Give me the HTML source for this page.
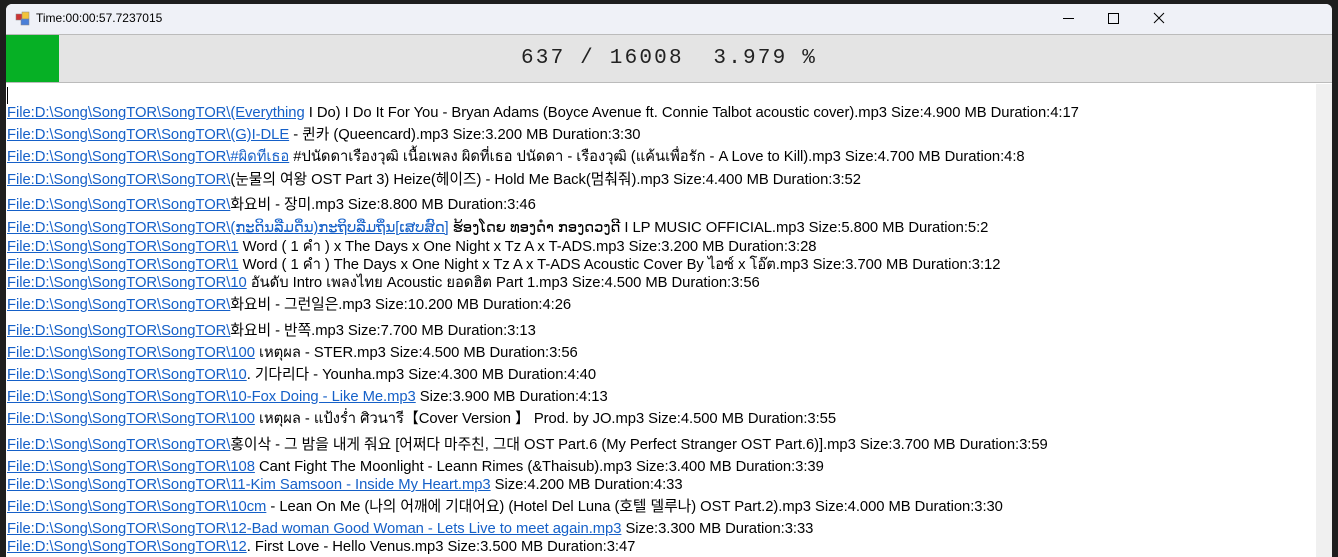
<!DOCTYPE html>
<html><head><meta charset="utf-8"><style>
body{margin:0;width:1338px;height:557px;background:#1e1e1e;position:relative;overflow:hidden;font-family:"Liberation Sans","Noto Sans CJK KR",sans-serif}
.win{position:absolute;left:6px;top:4px;width:1326px;height:553px;background:#fff;border-radius:6px 6px 0 0;overflow:hidden}
.tb{position:absolute;left:0;top:0;width:100%;height:30px;background:#eff1f7}
.title{position:absolute;left:30px;top:7px;font-size:12px;color:#000;font-family:"Liberation Sans",sans-serif}
.prog{position:absolute;left:0;top:30px;width:1326px;height:49px;background:#e4e4e4;border-top:1px solid #bbb;border-bottom:1px solid #bbb;box-sizing:border-box}
.bar{position:absolute;left:0;top:0;width:53px;height:100%;background:#06b025}
.pt{position:absolute;left:0;width:100%;top:12px;text-align:center;font-family:"Liberation Mono",monospace;font-size:21px;letter-spacing:2.2px;color:#222;white-space:pre}
.sb{position:absolute;left:1310px;top:80px;width:16px;height:480px;background:#f0f0f0}
.th{position:absolute;left:1317px;top:102px;width:2px;height:19px;background:#888}
.l{position:absolute;left:1px;font-size:14.8px;line-height:18px;white-space:nowrap;color:#000;letter-spacing:-0.05px}
.l a{color:#1560c8;text-decoration:underline}
</style></head><body>
<div class="win">
<div class="tb">
<svg style="position:absolute;left:9px;top:7px" width="16" height="16"><rect x="1" y="3" width="6" height="6" fill="#c33" stroke="#888" stroke-width=".5"/><rect x="7" y="1" width="7" height="7" fill="#f3c33a" stroke="#888" stroke-width=".5"/><rect x="6" y="8" width="8" height="6" fill="#4a7fd8" stroke="#888" stroke-width=".5"/></svg>
<div class="title">Time:00:00:57.7237015</div>
<div style="position:absolute;left:1057px;top:14px;width:11px;height:1px;background:#000"></div>
<div style="position:absolute;left:1102px;top:9px;width:9px;height:9px;border:1px solid #000"></div>
<svg style="position:absolute;left:1147px;top:8px" width="12" height="12"><path d="M1 1L11 11M11 1L1 11" stroke="#000" stroke-width="1"/></svg>
</div>
<div class="prog"><div class="bar"></div><div class="pt">637 / 16008  3.979 %</div></div>
<div style="position:absolute;left:1px;top:83px;width:1px;height:17px;background:#000"></div>
<div class="sb"><div class="th"></div></div>
<div class="l" style="top:100px"><a>File:D:\Song\SongTOR\SongTOR\(Everything</a> I Do) I Do It For You - Bryan Adams (Boyce Avenue ft. Connie Talbot acoustic cover).mp3 Size:4.900 MB Duration:4:17</div>
<div class="l" style="top:122px"><a>File:D:\Song\SongTOR\SongTOR\(G)I-DLE</a> - 퀸카 (Queencard).mp3 Size:3.200 MB Duration:3:30</div>
<div class="l" style="top:144px"><a>File:D:\Song\SongTOR\SongTOR\#ผิดทีเธอ</a> #ปนัดดาเรืองวุฒิ เนื้อเพลง ผิดที่เธอ ปนัดดา - เรืองวุฒิ (แค้นเพื่อรัก - A Love to Kill).mp3 Size:4.700 MB Duration:4:8</div>
<div class="l" style="top:167px"><a>File:D:\Song\SongTOR\SongTOR\</a>(눈물의 여왕 OST Part 3) Heize(헤이즈) - Hold Me Back(멈춰줘).mp3 Size:4.400 MB Duration:3:52</div>
<div class="l" style="top:192px"><a>File:D:\Song\SongTOR\SongTOR\</a>화요비 - 장미.mp3 Size:8.800 MB Duration:3:46</div>
<div class="l" style="top:215px"><a>File:D:\Song\SongTOR\SongTOR\(ກະດິນລືມດິ່ນ)ກະຖິບລືມຖິ່ນ[ເສບສົດ]</a> ຮ້ອງໂດຍ ທອງດຳ ກອງດວງດີ  I LP MUSIC OFFICIAL.mp3 Size:5.800 MB Duration:5:2</div>
<div class="l" style="top:234px"><a>File:D:\Song\SongTOR\SongTOR\1</a> Word ( 1 คำ ) x The Days x One Night x Tz A x T-ADS.mp3 Size:3.200 MB Duration:3:28</div>
<div class="l" style="top:252px"><a>File:D:\Song\SongTOR\SongTOR\1</a> Word ( 1 คำ ) The Days x One Night x Tz A x T-ADS  Acoustic Cover By ไอซ์ x โอ๊ต.mp3 Size:3.700 MB Duration:3:12</div>
<div class="l" style="top:270px"><a>File:D:\Song\SongTOR\SongTOR\10</a> อันดับ Intro เพลงไทย Acoustic ยอดฮิต Part 1.mp3 Size:4.500 MB Duration:3:56</div>
<div class="l" style="top:292px"><a>File:D:\Song\SongTOR\SongTOR\</a>화요비 - 그런일은.mp3 Size:10.200 MB Duration:4:26</div>
<div class="l" style="top:318px"><a>File:D:\Song\SongTOR\SongTOR\</a>화요비 -  반쪽.mp3 Size:7.700 MB Duration:3:13</div>
<div class="l" style="top:340px"><a>File:D:\Song\SongTOR\SongTOR\100</a> เหตุผล - STER.mp3 Size:4.500 MB Duration:3:56</div>
<div class="l" style="top:362px"><a>File:D:\Song\SongTOR\SongTOR\10</a>. 기다리다 - Younha.mp3 Size:4.300 MB Duration:4:40</div>
<div class="l" style="top:384px"><a>File:D:\Song\SongTOR\SongTOR\10-Fox Doing - Like Me.mp3</a> Size:3.900 MB Duration:4:13</div>
<div class="l" style="top:406px"><a>File:D:\Song\SongTOR\SongTOR\100</a> เหตุผล - แป้งร่ำ ศิวนารี【Cover Version 】 Prod. by JO.mp3 Size:4.500 MB Duration:3:55</div>
<div class="l" style="top:432px"><a>File:D:\Song\SongTOR\SongTOR\</a>홍이삭 - 그 밤을 내게 줘요 [어쩌다 마주친, 그대 OST Part.6 (My Perfect Stranger OST Part.6)].mp3 Size:3.700 MB Duration:3:59</div>
<div class="l" style="top:454px"><a>File:D:\Song\SongTOR\SongTOR\108</a>  Cant Fight The Moonlight - Leann Rimes (&amp;Thaisub).mp3 Size:3.400 MB Duration:3:39</div>
<div class="l" style="top:472px"><a>File:D:\Song\SongTOR\SongTOR\11-Kim Samsoon - Inside My Heart.mp3</a> Size:4.200 MB Duration:4:33</div>
<div class="l" style="top:494px"><a>File:D:\Song\SongTOR\SongTOR\10cm</a> - Lean On Me (나의 어깨에 기대어요) (Hotel Del Luna (호텔 델루나) OST Part.2).mp3 Size:4.000 MB Duration:3:30</div>
<div class="l" style="top:516px"><a>File:D:\Song\SongTOR\SongTOR\12-Bad woman Good Woman - Lets Live to meet again.mp3</a> Size:3.300 MB Duration:3:33</div>
<div class="l" style="top:534px"><a>File:D:\Song\SongTOR\SongTOR\12</a>. First Love - Hello Venus.mp3 Size:3.500 MB Duration:3:47</div>
</div>
</body></html>
